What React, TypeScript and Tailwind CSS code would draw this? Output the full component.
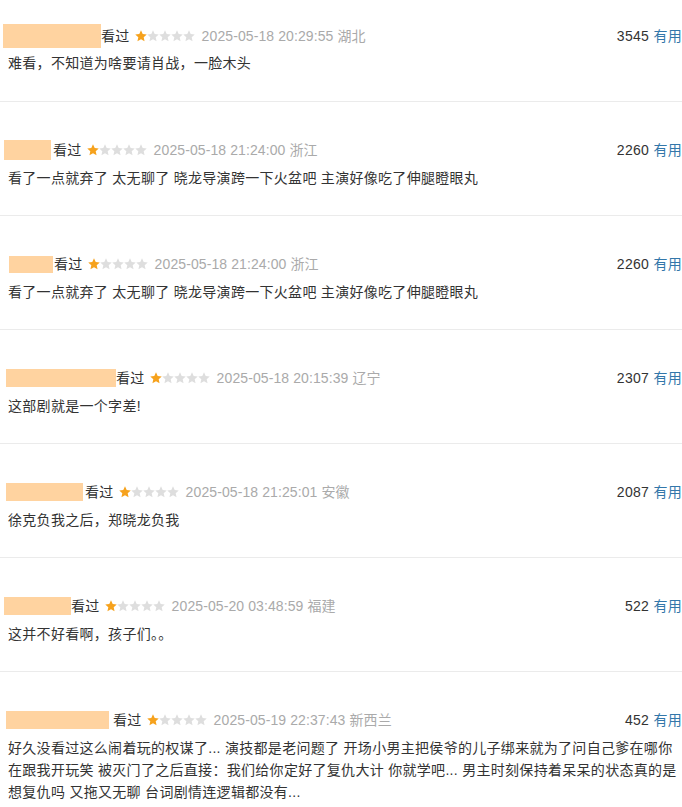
const reviews = [
  {
    id: 1,
    mask: { ml: "ml-[3px]", w: "w-[98px]", h: "h-[24px]", gap: "mr-0" },
    date: "2025-05-18 20:29:55 湖北",
    votes: 3545,
    lines: ["难看，不知道为啥要请肖战，一脸木头"],
  },
  {
    id: 2,
    mask: { ml: "ml-[4px]", w: "w-[47px]", h: "h-[20px]", gap: "mr-[2px]" },
    date: "2025-05-18 21:24:00 浙江",
    votes: 2260,
    lines: ["看了一点就弃了 太无聊了 晓龙导演跨一下火盆吧 主演好像吃了伸腿瞪眼丸"],
  },
  {
    id: 3,
    mask: { ml: "ml-[9px]", w: "w-[44px]", h: "h-[17px]", gap: "mr-[1px]" },
    date: "2025-05-18 21:24:00 浙江",
    votes: 2260,
    lines: ["看了一点就弃了 太无聊了 晓龙导演跨一下火盆吧 主演好像吃了伸腿瞪眼丸"],
  },
  {
    id: 4,
    mask: { ml: "ml-[6px]", w: "w-[110px]", h: "h-[18px]", gap: "mr-0" },
    date: "2025-05-18 20:15:39 辽宁",
    votes: 2307,
    lines: ["这部剧就是一个字差!"],
  },
  {
    id: 5,
    mask: { ml: "ml-[6px]", w: "w-[77px]", h: "h-[18px]", gap: "mr-[2px]" },
    date: "2025-05-18 21:25:01 安徽",
    votes: 2087,
    lines: ["徐克负我之后，郑晓龙负我"],
  },
  {
    id: 6,
    mask: { ml: "ml-[4px]", w: "w-[67px]", h: "h-[18px]", gap: "mr-0" },
    date: "2025-05-20 03:48:59 福建",
    votes: 522,
    lines: ["这并不好看啊，孩子们。。"],
  },
  {
    id: 7,
    mask: { ml: "ml-[6px]", w: "w-[103px]", h: "h-[18px]", gap: "mr-[4px]" },
    date: "2025-05-19 22:37:43 新西兰",
    votes: 452,
    lines: [
      "好久没看过这么闹着玩的权谋了... 演技都是老问题了 开场小男主把侯爷的儿子绑来就为了问自己爹在哪你",
      "在跟我开玩笑 被灭门了之后直接：我们给你定好了复仇大计 你就学吧... 男主时刻保持着呆呆的状态真的是",
      "想复仇吗 又拖又无聊 台词剧情连逻辑都没有...",
    ],
  },
];

function Star({ on }: { on: boolean }) {
  return (
    <svg width="12" height="12" viewBox="0 0 24 24" className="shrink-0">
      <polygon
        points="12,0.5 15.4,8 23.5,8.8 17.4,14.3 19.1,22.5 12,18.3 4.9,22.5 6.6,14.3 0.5,8.8 8.6,8"
        fill={on ? "#f6a21d" : "#dedede"}
      />
    </svg>
  );
}

function Stars({ rating }: { rating: number }) {
  return (
    <span className="flex items-center">
      {[1, 2, 3, 4, 5].map((n) => (
        <Star key={n} on={n <= rating} />
      ))}
    </span>
  );
}

export default function App() {
  return (
    <main
      className="w-[682px] min-h-[807px] bg-white text-[14px] text-[#333] tracking-[0.3px] overflow-hidden"
      style={{ fontFamily: '"Liberation Sans", Arial, "Noto Sans CJK SC", sans-serif' }}
    >
      {reviews.map((r, i) => {
        const first = i === 0;
        const last = i === reviews.length - 1;
        return (
          <div
            key={r.id}
            className={
              (first ? "pt-[24px] pb-[27px]" : "pt-[36px] pb-[26px]") +
              (last ? " pb-[10px]" : " border-b border-[#ebebeb]")
            }
          >
            <div className="flex items-center h-[24px] leading-[24px]">
              <span className={`${r.mask.ml} ${r.mask.w} ${r.mask.h} ${r.mask.gap} bg-[#ffd3a0] shrink-0`} />
              <span className="mr-[5px]">看过</span>
              <Stars rating={1} />
              <span className="ml-[7px] text-[#aaa] tracking-[0.1px]">{r.date}</span>
              <span className="ml-auto">
                {r.votes} <span className="text-[#3377aa]">有用</span>
              </span>
            </div>
            <p className={(first ? "mt-[4px]" : "mt-[5px]") + " pl-2 leading-[22px] whitespace-nowrap"}>
              {r.lines.map((line, j) => (
                <span key={j} className="block">
                  {line}
                </span>
              ))}
            </p>
          </div>
        );
      })}
    </main>
  );
}
